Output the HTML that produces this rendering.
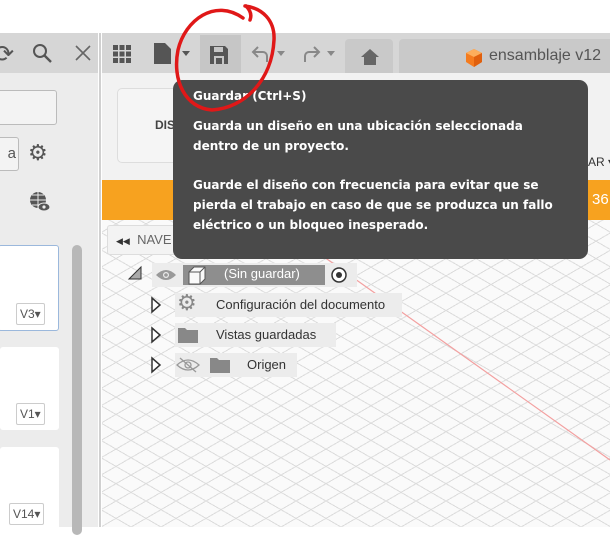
<!DOCTYPE html><html><head><meta charset="utf-8"><style>
*{margin:0;padding:0;box-sizing:border-box}
body{width:610px;height:527px;overflow:hidden;background:#fff;font-family:"Liberation Sans",sans-serif;position:relative}
.a{position:absolute;white-space:nowrap}
.grid{background-color:#fafafa;background-image:repeating-linear-gradient(30deg,transparent 0 14px,#dcdcdc 14px 15px),repeating-linear-gradient(-30deg,transparent 0 14px,#dcdcdc 14px 15px)}
.tt{font-family:"DejaVu Sans","Liberation Sans",sans-serif;font-weight:bold;color:#fff;font-size:12px;line-height:20px}
.row{background:#ececec;font-size:13px;color:#333;height:24px;line-height:24px}
.v{background:#fff;border:1px solid #ccc;border-radius:2px;font-size:12px;color:#555;height:22px;line-height:20px;padding:0 3px}
</style></head><body>
<div class="a" style="left:0;top:33px;width:610px;height:40px;background:#d6d6d6"></div>
<div class="a" style="left:98px;top:33px;width:4px;height:494px;background:#fff"></div>
<div class="a" style="left:99px;top:33px;width:2px;height:494px;background:#d0d0d0"></div>
<div class="a" style="left:-6px;top:40px;font-size:24px;color:#555">⟳</div>
<svg class="a" style="left:32px;top:43px" width="22" height="22"><circle cx="8" cy="8" r="6" fill="none" stroke="#555" stroke-width="2"/><line x1="12.5" y1="12.5" x2="19" y2="19" stroke="#555" stroke-width="2.4"/></svg>
<svg class="a" style="left:74px;top:44px" width="18" height="18"><path d="M2 2L16 16M16 2L2 16" stroke="#666" stroke-width="1.6"/></svg>
<svg class="a" style="left:112px;top:44px" width="20" height="20" fill="#555"><rect x="1" y="1" width="5" height="5"/><rect x="7.5" y="1" width="5" height="5"/><rect x="14" y="1" width="5" height="5"/><rect x="1" y="7.5" width="5" height="5"/><rect x="7.5" y="7.5" width="5" height="5"/><rect x="14" y="7.5" width="5" height="5"/><rect x="1" y="14" width="5" height="5"/><rect x="7.5" y="14" width="5" height="5"/><rect x="14" y="14" width="5" height="5"/></svg>
<svg class="a" style="left:153px;top:42px" width="40" height="24" fill="#555"><path d="M1 1h11l6 6v15H1z"/><path d="M29 9h8l-4 5z"/></svg>
<div class="a" style="left:200px;top:35px;width:41px;height:38px;background:#c6c6c6"></div>
<svg class="a" style="left:208px;top:44px" width="22" height="22"><path d="M2 2h15l3 3v15H2z" fill="#555"/><rect x="6" y="3" width="9" height="5" fill="#c6c6c6"/><rect x="6" y="12" width="10" height="8" fill="#c6c6c6"/><rect x="8" y="14" width="6" height="6" fill="#555"/></svg>
<svg class="a" style="left:250px;top:44px" width="40" height="22" fill="none" stroke="#888" stroke-width="2"><path d="M17 18v-6a4 4 0 0 0-4-4H4M8 3L3 8l5 5"/><path d="M27 7h8l-4 5z" fill="#888" stroke="none"/></svg>
<svg class="a" style="left:302px;top:44px" width="40" height="22" fill="none" stroke="#888" stroke-width="2"><path d="M3 18v-6a4 4 0 0 1 4-4h9M12 3l5 5-5 5"/><path d="M25 7h8l-4 5z" fill="#888" stroke="none"/></svg>
<div class="a" style="left:345px;top:39px;width:48px;height:34px;background:#c9c9c9;border-radius:4px 4px 0 0"></div>
<svg class="a" style="left:360px;top:48px" width="20" height="18" fill="#666"><path d="M10 1L1 9h3v8h12V9h3z"/></svg>
<div class="a" style="left:399px;top:39px;width:215px;height:34px;background:#c9c9c9;border-radius:4px 4px 0 0"></div>
<svg class="a" style="left:464px;top:48px" width="20" height="20"><path d="M10 1l8 4v9l-8 5-8-5V5z" fill="#f57c1f"/><path d="M10 1l8 4-8 4-8-4z" fill="#fdae5c"/><path d="M10 9v10l8-5V5z" fill="#e0600e"/></svg>
<div class="a" style="left:489px;top:47px;font-size:16px;color:#555">ensamblaje v12</div>
<div class="a" style="left:0;top:73px;width:98px;height:454px;background:#ececec"></div>
<div class="a" style="left:-4px;top:90px;width:61px;height:35px;background:#f3f3f3;border:1px solid #bbb;border-radius:3px"></div>
<div class="a" style="left:-4px;top:137px;width:23px;height:34px;background:#f3f3f3;border:1px solid #bbb;border-radius:3px;font-size:15px;color:#555;line-height:32px;text-align:right;padding-right:2px">a</div>
<div class="a" style="left:28px;top:140px;font-size:22px;color:#555">⚙</div>
<svg class="a" style="left:29px;top:191px" width="22" height="22"><circle cx="9" cy="9" r="8" fill="#555"/><path d="M1 9h16M9 1v16M3 4h12M3 14h12" stroke="#ececec" stroke-width="1"/><ellipse cx="15" cy="16" rx="6" ry="4" fill="#555" stroke="#ececec"/><circle cx="15" cy="16" r="1.6" fill="#ececec"/></svg>
<div class="a" style="left:-2px;top:245px;width:61px;height:86px;background:#fff;border:1px solid #9bb8dc;border-radius:3px"></div>
<div class="a v" style="left:16px;top:303px">V3▾</div>
<div class="a" style="left:0;top:347px;width:59px;height:83px;background:#fff;border-radius:3px"></div>
<div class="a v" style="left:16px;top:403px">V1▾</div>
<div class="a" style="left:0;top:447px;width:59px;height:90px;background:#fff;border-radius:3px"></div>
<div class="a v" style="left:9px;top:503px">V14▾</div>
<div class="a" style="left:72px;top:245px;width:10px;height:290px;background:#b8b8b8;border-radius:5px"></div>
<div class="a" style="left:102px;top:73px;width:508px;height:107px;background:#f2f2f2"></div>
<div class="a" style="left:117px;top:88px;width:80px;height:75px;background:#f5f5f5;border:1px solid #ddd;border-radius:5px"></div>
<div class="a" style="left:155px;top:118px;font-size:12px;font-weight:bold;color:#444">DIS</div>
<div class="a" style="left:588px;top:155px;font-size:12px;color:#333">AR ▾</div>
<div class="a" style="left:102px;top:180px;width:508px;height:40px;background:#f7a21f"></div>
<div class="a" style="left:592px;top:191px;font-size:15px;color:#fff">36</div>
<div class="a grid" style="left:102px;top:220px;width:508px;height:307px"></div>
<svg class="a" style="left:102px;top:220px" width="508" height="307"><path d="M170 0L508 240" stroke="#f3a0a0" stroke-width="1.2"/></svg>
<div class="a" style="left:107px;top:225px;width:120px;height:30px;background:#f3f3f3;border:1px solid #ddd;border-radius:3px;font-size:13px;color:#666;line-height:28px;padding-left:8px"><span style="font-size:9px;color:#333">◀◀</span>&nbsp; NAVE</div>
<div class="a" style="left:152px;top:263px;width:205px;height:24px;background:#ececec"></div>
<svg class="a" style="left:127px;top:265px" width="16" height="16"><path d="M2 14L14 2V14Z" fill="#aaa" stroke="#333"/></svg>
<svg class="a" style="left:155px;top:268px" width="22" height="14"><path d="M1 7Q11-3 21 7Q11 17 1 7Z" fill="#999"/><circle cx="11" cy="7" r="3" fill="#ececec"/><circle cx="11" cy="7" r="1.8" fill="#999"/></svg>
<div class="a" style="left:183px;top:265px;width:142px;height:20px;background:#8e8e8e"></div>
<svg class="a" style="left:186px;top:265px" width="22" height="22"><path d="M3 7l5-5h11v12l-5 5H3z" fill="#fafafa" stroke="#555"/><path d="M3 7h11v12M14 7l5-5" fill="none" stroke="#555"/></svg>
<div class="a" style="left:224px;top:266px;font-size:13px;color:#fff">(Sin guardar)</div>
<svg class="a" style="left:330px;top:266px" width="18" height="18"><circle cx="9" cy="9" r="7" fill="#fff" stroke="#333" stroke-width="1.5"/><circle cx="9" cy="9" r="3" fill="#333"/></svg>
<div class="a row" style="left:175px;top:293px;width:227px"></div>
<div class="a row" style="left:175px;top:323px;width:161px"></div>
<div class="a row" style="left:175px;top:353px;width:122px"></div>
<svg class="a" style="left:150px;top:296px" width="12" height="80" fill="#fff" stroke="#333" stroke-width="1.5"><path d="M2 2l8 7-8 7z"/><path d="M2 32l8 7-8 7z"/><path d="M2 62l8 7-8 7z"/></svg>
<div class="a" style="left:177px;top:290px;font-size:22px;color:#888">⚙</div>
<div class="a" style="left:216px;top:297px;font-size:13px;color:#333">Configuración del documento</div>
<svg class="a" style="left:177px;top:326px" width="22" height="18" fill="#888"><path d="M1 2h7l2 2h11v13H1z"/></svg>
<div class="a" style="left:216px;top:327px;font-size:13px;color:#333">Vistas guardadas</div>
<svg class="a" style="left:176px;top:357px" width="24" height="16" fill="none" stroke="#999" stroke-width="1.3"><path d="M1 8Q12-2 23 8Q12 18 1 8Z"/><circle cx="12" cy="8" r="3"/><path d="M4 1L20 15"/></svg>
<svg class="a" style="left:209px;top:356px" width="22" height="18" fill="#888"><path d="M1 2h7l2 2h11v13H1z"/></svg>
<div class="a" style="left:247px;top:357px;font-size:13px;color:#333">Origen</div>
<div class="a" style="left:173px;top:80px;width:415px;height:179px;background:#4a4a4a;border-radius:9px"></div>
<div class="a tt" style="left:193px;top:86px">Guardar (Ctrl+S)</div>
<div class="a tt" style="left:193px;top:116px">Guarda un diseño en una ubicación seleccionada<br>dentro de un proyecto.</div>
<div class="a tt" style="left:193px;top:175px">Guarde el diseño con frecuencia para evitar que se<br>pierda el trabajo en caso de que se produzca un fallo<br>eléctrico o un bloqueo inesperado.</div>
<svg class="a" style="left:0;top:0" width="610" height="527"><path d="M243 18C215 -2 185 20 178 50C172 80 185 108 212 110C245 108 272 80 274 40C275 20 262 8 245 6M246 6C250 10 252 15 250 20" fill="none" stroke="#e01818" stroke-width="3.5" stroke-linecap="round"/></svg>
</body></html>
